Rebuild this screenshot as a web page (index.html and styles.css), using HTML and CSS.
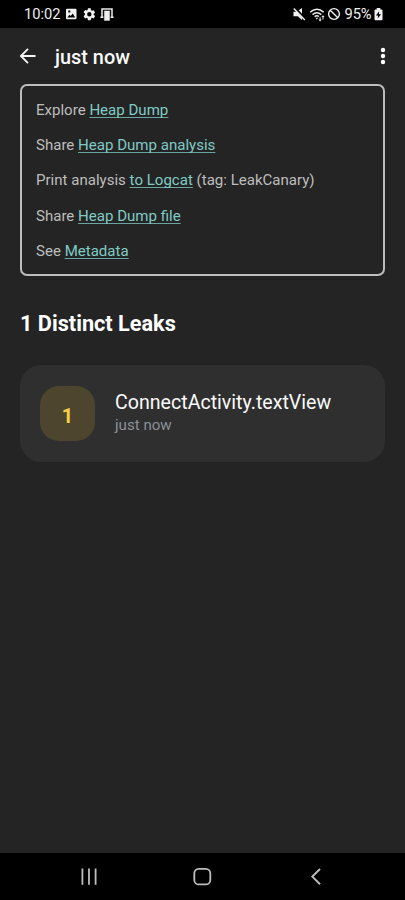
FILE: index.html
```
<!DOCTYPE html>
<html lang="en">
<head>
<meta charset="utf-8">
<title>LeakCanary</title>
<link rel="stylesheet" href="styles.css">
</head>
<body>
<div class="phone">
  <div class="status">
    <span class="clock">10:02</span>
    <svg class="notifications" width="50" height="16" viewBox="0 0 50 16">
      <path fill="#f2f2f2" fill-rule="evenodd" d="M2 2.800h8.500q1 0 1 1v8.400q0 1-1 1H2q-1 0-1-1V3.800q0-1 1-1zM2.300 11.500h7.900L7.700 7.600l-2 2.300-1.300-1.200zM3.300 4.600v2h2v-2z"/>
      <g transform="translate(17 1) scale(.61)"><path fill="#f2f2f2" d="M19.140 12.940c.04-.3.06-.61.06-.94s-.02-.64-.07-.94l2.030-1.580a.49.490 0 0 0 .12-.61l-1.920-3.320a.49.490 0 0 0-.59-.22l-2.390.96a7 7 0 0 0-1.620-.94l-.36-2.540A.48.480 0 0 0 13.920 2h-3.840a.48.480 0 0 0-.47.410l-.36 2.540a7.300 7.300 0 0 0-1.620.94l-2.390-.96a.48.480 0 0 0-.59.220L2.740 8.470a.48.480 0 0 0 .12.610l2.030 1.580a6 6 0 0 0 0 2.280l-2.030 1.580a.49.490 0 0 0-.12.610l1.920 3.320c.12.220.37.290.59.220l2.390-.96c.5.380 1.030.7 1.620.94l.36 2.540c.05.240.24.410.48.410h3.840c.24 0 .44-.17.470-.41l.36-2.540a7 7 0 0 0 1.620-.94l2.390.96c.22.080.47 0 .59-.22l1.920-3.320a.48.480 0 0 0-.12-.61zM12 15.600a3.600 3.600 0 1 1 0-7.200 3.600 3.600 0 0 1 0 7.200z"/></g>
      <path fill="none" stroke="#ededed" stroke-width="1.500" d="M37 11V3h10v8M35.400 11.300h3.200M45.400 11.300h3.200"/>
      <path fill="#ededed" stroke="#000" stroke-width=".6" d="M38.900 4.400h6.200v10.600h-6.200z"/>
    </svg>
    <svg class="signals" width="50" height="16" viewBox="0 0 50 16">
      <path fill="#f2f2f2" d="M.5 5.700h3.200L9 2v12L4.800 10.300H.5z"/>
      <path stroke="#000" stroke-width="2.600" d="M2 2.200l10 10.800"/><path stroke="#f2f2f2" stroke-width="1.400" d="M.8 2.500l11 11.500"/>
      <g fill="none" stroke="#ededed" stroke-width="1.400"><path d="M17.200 6.100q6.800-5.600 13.400 0M19.500 8.600q4.300-3.700 8.800 0M21.600 10.600q2.300-1.900 4.400 0"/></g>
      <path fill="#ededed" d="M22.500 11.800h2.600l-1.300 1.600zM26.600 11.200h1v2.300h1.100l-1.600 1.900-1.600-1.900h1.100zM30 9.200l1.600 1.900h-1.100v2.300h-1v-2.300h-1.100z"/>
      <circle cx="41" cy="8" r="5.400" fill="none" stroke="#f2f2f2" stroke-width="1.400"/><path stroke="#f2f2f2" stroke-width="1.400" d="M37.200 4.200l7.600 7.600"/>
    </svg>
    <span class="percent">95%</span>
    <svg class="battery" width="9" height="13" viewBox="0 0 9 13">
      <path fill="#f2f2f2" d="M2.700 0h3.600v1.500h1.200q1 0 1 1v8.700q0 1-1 1h-6q-1 0-1-1V2.500q0-1 1-1h1.200z"/><path fill="#000" d="M5.200 3.200L1.900 7.500h2.200l-.4 3 3.400-4.300H4.900z"/>
    </svg>
  </div>
  <header class="toolbar">
    <svg class="back" width="18" height="18" viewBox="0 0 18 18"><path fill="none" stroke="#f5f5f5" stroke-width="1.800" d="M16.500 9H2M9 1.900L1.900 9 9 16.100"/></svg>
    <h1>just now</h1>
    <svg class="more" width="6" height="18" viewBox="0 0 6 18" fill="#fff"><circle cx="3" cy="3" r="2.200"/><circle cx="3" cy="9" r="2.200"/><circle cx="3" cy="15" r="2.200"/></svg>
  </header>
  <main>
    <section class="actions">
      <p>Explore <a>Heap Dump</a></p>
      <p>Share <a>Heap Dump analysis</a></p>
      <p>Print analysis <a>to Logcat</a> (tag: LeakCanary)</p>
      <p>Share <a>Heap Dump file</a></p>
      <p>See <a>Metadata</a></p>
    </section>
    <h2>1 Distinct Leaks</h2>
    <article class="leak">
      <div class="count">1</div>
      <div class="details"><h3>ConnectActivity.textView</h3><time>just now</time></div>
    </article>
  </main>
  <nav class="navbar">
    <svg width="405" height="47" viewBox="0 0 405 47" fill="none" stroke="#bdbdbd">
      <path stroke-width="1.800" d="M82.400 15.500v16.200M89 15.500v16.200M95.600 15.500v16.200"/>
      <rect x="194.300" y="15.800" width="16" height="15.600" rx="4.500" stroke-width="1.800"/>
      <path stroke-width="1.900" d="M320 16l-7.700 7.600 7.700 7.600"/>
    </svg>
  </nav>
</div>
</body>
</html>
```
FILE: styles.css
```
* { box-sizing: border-box; }
body { margin: 0; background: #242424; font-family: Roboto, sans-serif; }
h1, h2, h3, p { margin: 0; }
svg { display: block; flex: none; }
.phone { width: 405px; height: 900px; display: flex; flex-direction: column; background: #242424; overflow: hidden; }
.status { height: 28px; flex: none; display: flex; align-items: center; background: #000; color: #eee; font-size: 14.700px; line-height: 28px; padding: 0 22.500px 0 24px; }
.clock { width: 41px; }
.signals { margin-left: auto; }
.percent { width: 29px; margin-left: 2px; white-space: nowrap; letter-spacing: -.1px; }
.toolbar { height: 56px; flex: none; display: flex; align-items: center; padding: 0 19px; color: #fafafa; }
.toolbar h1 { margin: 3px 0 0 18px; font-size: 19.900px; line-height: 26px; font-weight: 500; }
.more { margin-left: auto; }
main { flex: 1; padding: 0 20px; }
.actions { height: 192px; border: 2px solid #bdbdbd; border-radius: 7px; padding: 7px 14px; color: #bdbdbd; font-size: 15.050px; }
.actions p { height: 35.200px; line-height: 35.200px; white-space: nowrap; }
.actions a { color: #80cbc4; text-decoration: underline; text-decoration-color: #69a59f; text-decoration-thickness: 1px; text-underline-offset: 2px; text-decoration-skip-ink: none; }
h2 { margin: 33px 0 27px; color: #fff; font-size: 21.700px; line-height: 29px; font-weight: 700; }
.leak { height: 97px; display: flex; align-items: center; border-radius: 21px; background: #2f2f2f; padding: 0 20px; }
.count { width: 55px; height: 55px; border-radius: 19px; background: #4d452e; color: #f8cf46; font-size: 20px; font-weight: 700; line-height: 60px; text-align: center; }
.details { margin: -1px 0 0 20px; }
.details h3 { color: #fafafa; font-size: 19.600px; font-weight: 400; line-height: 26px; }
.details time { display: block; margin-top: -1px; color: #8b9097; font-size: 15.100px; line-height: 21px; }
.navbar { height: 47px; flex: none; background: #000; }
```
